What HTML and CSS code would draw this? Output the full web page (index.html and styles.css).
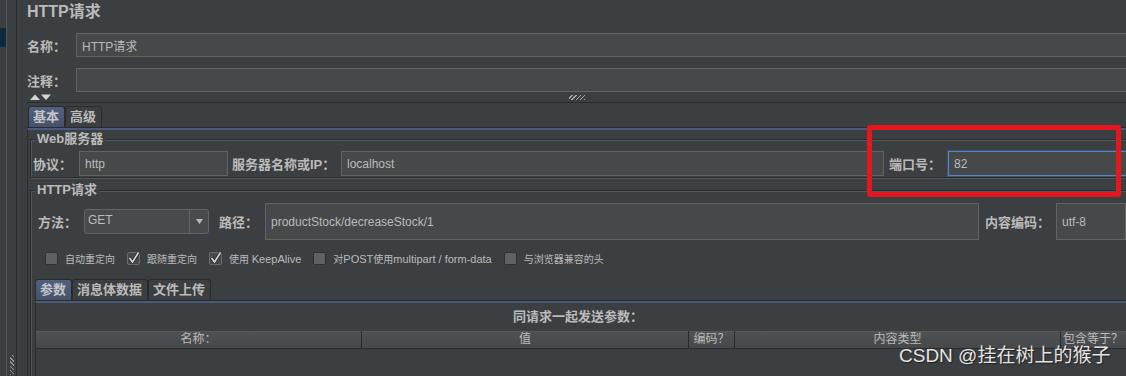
FILE: index.html
```html
<!DOCTYPE html>
<html lang="zh-CN">
  <head>
    <meta charset="UTF-8">
    <meta name="viewport" content="width=device-width, initial-scale=1.0">
    <title>HTTP请求</title>
    <link rel="stylesheet" href="styles.css">
  </head>
  <body>
    <div class="app">
      <!-- left tree strip -->
      <div class="nav">
        <div class="nav-tree"><div class="nav-sel"></div></div>
        <div class="nav-gap"><span class="nav-grip"></span></div>
      </div>

      <div class="main">
        <div class="title">HTTP请求</div>

        <div class="field-row">
          <span class="label name-label">名称：</span>
          <input class="input wide" type="text" value="HTTP请求">
        </div>
        <div class="field-row comment-row">
          <span class="label name-label">注释：</span>
          <input class="input wide" type="text" value="">
        </div>

        <div class="splitter">
          <svg class="arrows" width="22" height="6" viewBox="0 0 22 6">
            <path d="M0 6 L5 0.5 L10 6 Z" fill="#d4d4d4"/>
            <path d="M11 0.5 L21 0.5 L16 6 Z" fill="#d4d4d4"/>
          </svg>
          <span class="grip"></span>
          <span></span>
        </div>

        <div class="tabs">
          <span class="tab active">基本</span>
          <span class="tab">高级</span>
        </div>
        <div class="tab-body">
          <fieldset class="group">
            <legend>Web服务器</legend>
            <div class="server-row">
              <span class="label proto-label">协议：</span>
              <input class="input proto" type="text" value="http">
              <span class="label host-label">服务器名称或IP：</span>
              <input class="input host" type="text" value="localhost">
              <span class="label port-label">端口号：</span>
              <input class="input port" type="text" value="82">
            </div>
          </fieldset>

          <fieldset class="group request">
            <legend>HTTP请求</legend>
            <div class="request-row">
              <span class="label method-label">方法：</span>
              <div class="select">
                <span class="select-value">GET</span>
                <span class="select-arrow">
                  <svg width="7" height="5" viewBox="0 0 7 5"><path d="M0 0 H7 L3.5 5 Z" fill="#bbbbbb"/></svg>
                </span>
              </div>
              <span class="label path-label">路径：</span>
              <input class="input path" type="text" value="productStock/decreaseStock/1">
              <span class="label enc-label">内容编码：</span>
              <input class="input enc" type="text" value="utf-8">
            </div>

            <div class="options">
              <label class="option">
                <svg class="check" viewBox="0 0 13 13"><rect x="0.5" y="0.5" width="12" height="12" rx="1.5" fill="#5f6264" stroke="#2e3031"/></svg>
                自动重定向
              </label>
              <label class="option">
                <svg class="check" viewBox="0 0 13 13"><rect x="0.5" y="0.5" width="12" height="12" rx="1.5" fill="#45494a" stroke="#6a6d6f"/><path d="M2.5 6 L5.5 10 L11.5 0.5" fill="none" stroke="#2b2b2b" stroke-width="3.2"/><path d="M2.5 6 L5.5 10 L11.5 0.5" fill="none" stroke="#d8d8d8" stroke-width="1.6"/></svg>
                跟随重定向
              </label>
              <label class="option">
                <svg class="check" viewBox="0 0 13 13"><rect x="0.5" y="0.5" width="12" height="12" rx="1.5" fill="#45494a" stroke="#6a6d6f"/><path d="M2.5 6 L5.5 10 L11.5 0.5" fill="none" stroke="#2b2b2b" stroke-width="3.2"/><path d="M2.5 6 L5.5 10 L11.5 0.5" fill="none" stroke="#d8d8d8" stroke-width="1.6"/></svg>
                <span>使用 <span class="latin">KeepAlive</span></span>
              </label>
              <label class="option">
                <svg class="check" viewBox="0 0 13 13"><rect x="0.5" y="0.5" width="12" height="12" rx="1.5" fill="#5f6264" stroke="#2e3031"/></svg>
                <span>对<span class="latin">POST</span>使用<span class="latin">multipart / form-data</span></span>
              </label>
              <label class="option">
                <svg class="check" viewBox="0 0 13 13"><rect x="0.5" y="0.5" width="12" height="12" rx="1.5" fill="#5f6264" stroke="#2e3031"/></svg>
                与浏览器兼容的头
              </label>
            </div>

            <div class="tabs subtabs">
              <span class="tab active">参数</span>
              <span class="tab">消息体数据</span>
              <span class="tab">文件上传</span>
            </div>
            <div class="tab-body sub-body">
              <div class="params-title">同请求一起发送参数：</div>
              <div class="table-head">
                <span class="col col-name">名称：</span>
                <span class="col col-value">值</span>
                <span class="col col-enc">编码？</span>
                <span class="col col-type">内容类型</span>
                <span class="col col-eq">包含等于？</span>
              </div>
              <div class="table-rows"></div>
            </div>
          </fieldset>
        </div>
      </div>

      <div class="highlight"></div>
      <div class="watermark">CSDN @挂在树上的猴子</div>
    </div>
  </body>
</html>
```

FILE: styles.css
```css
html, body{
    overflow: hidden;
}

body{
    margin: 0;
    background-color: #3c3f41;
    color: #bbbbbb;
    font-family: "Liberation Sans", "Noto Sans CJK SC", sans-serif;
    font-size: 12px;
}

.app{
    position: relative;
    display: flex;
    width: 1132px;
    height: 376px;
    overflow: hidden;
}

/* left strip */
.nav{
    display: flex;
    flex: none;
}

.nav-tree{
    width: 6px;
    border-right: 1px solid #55585a;
}

.nav-sel{
    height: 19px;
    margin-top: 28px;
    background-color: #0d293e;
}

.nav-gap{
    width: 9px;
    border-right: 1px solid #2b2b2b;
    display: flex;
    flex-direction: column;
    justify-content: flex-end;
    align-items: center;
}

.nav-grip{
    width: 4px;
    height: 20px;
    margin-bottom: 1px;
    background: repeating-linear-gradient(45deg, #9a9a9a 0 1px, transparent 1px 3px);
}

.main{
    flex: 1;
    min-width: 0;
    padding-left: 10px;
}

.title{
    height: 33px;
    line-height: 24px;
    font-size: 16px;
    font-weight: bold;
}

.field-row{
    display: flex;
    align-items: center;
    height: 24px;
}

.comment-row{
    margin-top: 11px;
}

.label{
    flex: none;
    font-size: 13px;
    font-weight: bold;
    white-space: nowrap;
}

.name-label{
    width: 49px;
}

.input{
    box-sizing: border-box;
    height: 25px;
    min-width: 0;
    padding: 0 5px;
    border: 1px solid #646464;
    background-color: #45494a;
    color: #bbbbbb;
    font: 12px "Liberation Sans", "Noto Sans CJK SC", sans-serif;
    outline: none;
}

.wide{
    flex: 1;
    height: 24px;
    margin-right: -10px;
}

.splitter{
    display: grid;
    grid-template-columns: 1fr auto 1fr;
    align-items: center;
    height: 10px;
    border-bottom: 1px solid #2b2b2b;
}

.arrows{
    margin-left: 3px;
}

.grip{
    width: 16px;
    height: 5px;
    margin-right: 5px;
    background: repeating-linear-gradient(-45deg, #a8a8a8 0 1px, transparent 1px 3px);
}

/* tabs */
.tabs{
    display: flex;
    margin-top: 3px;
    padding-left: 1px;
    border-bottom: 1px solid #2b2b2b;
}

.tab{
    height: 20px;
    line-height: 20px;
    padding: 0 5px 0 4px;
    border: 1px solid #2b2b2b;
    border-bottom: none;
    border-radius: 3px 3px 0 0;
    font-size: 13px;
    font-weight: bold;
}

.tab.active{
    background: linear-gradient(#50607f, #45526c);
    color: #c6c6c6;
}

.tab-body{
    border-top: 2px solid #4a5a7a;
    border-left: 1px solid #2b2b2b;
}

/* etched groups */
.group{
    min-width: 0;
    margin: 2px 0 0 2px;
    padding: 0 2px;
    border: 1px solid #2b2b2b;
    box-shadow: inset 1px 1px 0 #55585a, 1px 1px 0 #55585a;
}

.group legend{
    margin-left: 2px;
    padding: 0 2px;
    line-height: 14px;
    font-size: 13px;
    font-weight: bold;
    background-color: #3c3f41;
}

.request{
    margin-top: 5px;
}

.server-row{
    display: flex;
    align-items: center;
    padding: 5px 0 1px;
}

.proto-label{
    width: 46px;
}

.proto{
    width: 149px;
}

.host-label{
    width: 109px;
    margin-left: 4px;
}

.host{
    width: 543px;
}

.port-label{
    width: 59px;
    margin-left: 5px;
}

.port{
    flex: 1;
    margin-right: -10px;
    border-color: #5a86c0;
    box-shadow: 0 0 0 1px #3a5273;
}

.request-row{
    display: flex;
    align-items: center;
    height: 37px;
    padding: 6px 0 0 5px;
}

.method-label{
    width: 46px;
}

.select{
    display: flex;
    box-sizing: border-box;
    width: 125px;
    height: 25px;
    border: 1px solid #646464;
    border-radius: 3px;
    background-color: #484b4d;
}

.select-value{
    flex: 1;
    padding-left: 3px;
    line-height: 21px;
}

.select-arrow{
    display: flex;
    align-items: center;
    justify-content: center;
    width: 18px;
    border-left: 1px solid #646464;
}

.path-label{
    width: 46px;
    margin-left: 10px;
}

.path{
    width: 714px;
    height: 37px;
}

.enc-label{
    width: 71px;
    margin-left: 6px;
}

.enc{
    width: 70px;
    height: 37px;
}

/* checkboxes */
.options{
    display: flex;
    align-items: center;
    margin-top: 11px;
    padding-left: 12px;
    font-size: 10px;
    white-space: nowrap;
}

.option{
    display: flex;
    align-items: center;
    gap: 7px;
    margin-right: 12px;
}

.check{
    width: 13px;
    height: 13px;
    flex: none;
    overflow: visible;
}

.latin{
    font-size: 11px;
}

.subtabs{
    margin: 13px 0 0 2px;
    padding-left: 0;
}

.sub-body{
    margin-left: 2px;
}

.params-title{
    padding: 7px 9px 7px 0;
    line-height: 14px;
    text-align: center;
    font-size: 13px;
    font-weight: bold;
}

.table-head{
    display: flex;
    height: 17px;
    line-height: 17px;
    border-bottom: 1px solid #2b2b2b;
    background: linear-gradient(#4f5254, #46494b);
    box-shadow: inset 0 1px 0 #57595b;
    white-space: nowrap;
}

.col{
    box-sizing: border-box;
    text-align: center;
    border-left: 1px solid #2b2b2b;
}

.col-name{
    width: 325px;
    border-left: none;
}

.col-value{
    width: 327px;
}

.col-enc{
    width: 46px;
}

.col-type{
    width: 326px;
}

.col-eq{
    flex: 1;
    padding-left: 2px;
    text-align: left;
}

.table-rows{
    height: 80px;
}

/* screenshot markup on top */
.highlight{
    position: absolute;
    left: 867px;
    top: 125px;
    width: 254px;
    height: 72px;
    box-sizing: border-box;
    border: 5px solid #e4161e;
    border-radius: 3px;
}

.watermark{
    position: absolute;
    left: 899px;
    top: 345px;
    font-size: 19px;
    line-height: 22px;
    color: #e4e4e4;
    text-shadow: 1px 1px 1px #1e1e1e;
    white-space: nowrap;
}
```
